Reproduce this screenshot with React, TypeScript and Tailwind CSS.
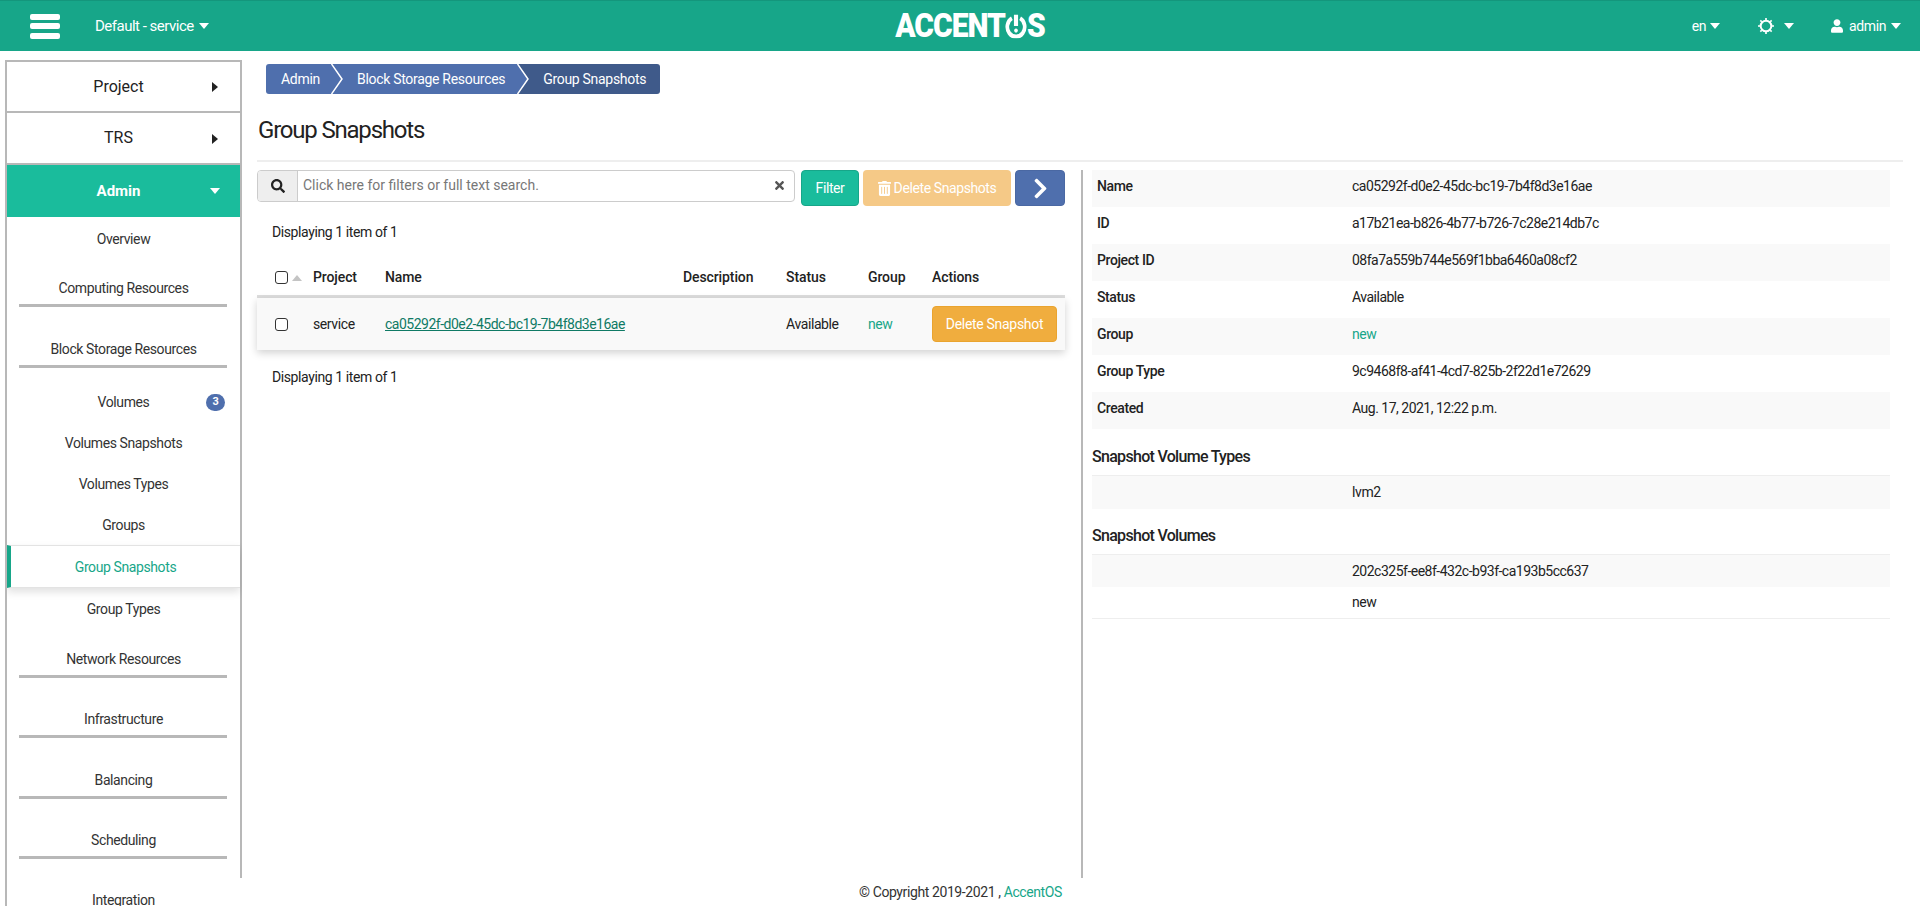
import { FaChevronRight, FaSearch, FaTimes, FaTrashAlt, FaUser } from "react-icons/fa";

const details = [
  ["Name", "ca05292f-d0e2-45dc-bc19-7b4f8d3e16ae"],
  ["ID", "a17b21ea-b826-4b77-b726-7c28e214db7c"],
  ["Project ID", "08fa7a559b744e569f1bba6460a08cf2"],
  ["Status", "Available"],
  ["Group", "new"],
  ["Group Type", "9c9468f8-af41-4cd7-825b-2f22d1e72629"],
  ["Created", "Aug. 17, 2021, 12:22 p.m."],
];

function Caret({ dir = "down", className = "" }: { dir?: "down" | "right"; className?: string }) {
  return (
    <svg viewBox="0 0 10 10" className={`shrink-0 fill-current ${className}`}>
      {dir === "down" ? <polygon points="0,2 10,2 5,8" /> : <polygon points="2,0 8,5 2,10" />}
    </svg>
  );
}

function SideGroup({ label, height }: { label: string; height: string }) {
  return (
    <div className={`flex flex-col justify-end ${height}`}>
      <div className="pb-[5px] text-center text-[#333]">{label}</div>
      <div className="ml-[12px] mr-[13px] h-[3px] bg-[#b8b8b8]" />
    </div>
  );
}

function SideLink({ label, badge, height = "h-[41px]" }: { label: string; badge?: string; height?: string }) {
  return (
    <div className={`relative flex items-center justify-center text-[#333] ${height}`}>
      {label}
      {badge && (
        <span className="absolute right-[15px] top-[12px] flex h-[17px] w-[19px] items-center justify-center rounded-full bg-[#4f6fad] text-[11px] font-bold text-white">
          {badge}
        </span>
      )}
    </div>
  );
}

function Sidebar() {
  return (
    <aside className="h-[846px] w-[237px] shrink-0 overflow-hidden border-l-2 border-[#b8b8b8]">
      <div className="h-[818px] border-r-2 border-[#b8b8b8]">
        <div className="relative flex h-[53px] items-center justify-center border-y-2 border-[#b8b8b8] pr-[10px] text-[16px] tracking-normal text-[#222]">
          Project
          <Caret dir="right" className="absolute right-[20px] top-[20px] h-[10px] w-[10px]" />
        </div>
        <div className="relative flex h-[52px] items-center justify-center border-b-2 border-[#b8b8b8] pr-[10px] text-[16px] tracking-normal text-[#222]">
          TRS
          <Caret dir="right" className="absolute right-[20px] top-[21px] h-[10px] w-[10px]" />
        </div>
        <div className="relative flex h-[52px] items-center justify-center bg-[#1abc9c] pr-[10px] text-[15px] font-bold tracking-normal text-white">
          Admin
          <Caret className="absolute right-[20px] top-[21px] h-[10px] w-[10px]" />
        </div>
        <SideLink label="Overview" height="h-[44px]" />
        <SideGroup label="Computing Resources" height="h-[46px]" />
        <SideGroup label="Block Storage Resources" height="h-[61px]" />
        <div className="h-[14px]" />
        <SideLink label="Volumes" badge="3" />
        <SideLink label="Volumes Snapshots" />
        <SideLink label="Volumes Types" />
        <SideLink label="Groups" height="h-[40px]" />
        <div className="relative z-10 flex h-[43px] items-center justify-center border-y border-[#e3e3e3] border-l-4 border-l-[#17a689] bg-white pt-[1px] text-[#17a689] shadow-[0_4px_8px_rgba(0,0,0,0.12)]">
          Group Snapshots
        </div>
        <SideLink label="Group Types" height="h-[42px]" />
        <SideGroup label="Network Resources" height="h-[48px]" />
        <SideGroup label="Infrastructure" height="h-[60px]" />
        <SideGroup label="Balancing" height="h-[61px]" />
        <SideGroup label="Scheduling" height="h-[60px]" />
        <SideGroup label="Integration" height="h-[60px]" />
      </div>
    </aside>
  );
}

function Header() {
  return (
    <header className="flex h-[51px] items-center border-t border-[#14967c] bg-[#17a689] text-white">
      <div className="flex w-[895px] items-center">
        <div className="ml-[30px] flex h-[25px] w-[30px] flex-col justify-between">
          <span className="h-[6px] rounded-[2px] bg-white" />
          <span className="h-[6px] rounded-[2px] bg-white" />
          <span className="h-[6px] rounded-[2px] bg-white" />
        </div>
        <div className="ml-[35px] flex items-center gap-[5px] text-[15px] tracking-[-0.5px]">
          Default - service
          <Caret className="h-[10px] w-[10px]" />
        </div>
      </div>
      <div className="flex h-[26px] w-[150px] scale-y-[1.12] items-center justify-center text-[30px] font-black leading-none tracking-[-1px]">
        ACCENT
        <svg viewBox="0 0 24 24" className="h-[22px] w-[22px] shrink-0" fill="none" stroke="currentColor">
          <path d="M7.5 4.5a9.5 9.5 0 1 0 9 0" strokeWidth="4" />
          <path d="M12 1v11" strokeWidth="4.5" />
          <circle cx="12" cy="16.5" r="2" fill="currentColor" stroke="none" />
        </svg>
        S
      </div>
      <div className="ml-auto flex items-center pr-[19px]">
        <span>en</span>
        <Caret className="ml-[4px] h-[10px] w-[10px]" />
        <svg viewBox="0 0 24 24" className="ml-[38px] h-[16px] w-[16px] shrink-0" fill="none" stroke="currentColor">
          <circle cx="12" cy="12" r="8" strokeWidth="3" />
          <path d="M12 0v3M12 21v3M0 12h3M21 12h3M3.5 3.5l2.1 2.1M18.4 18.4l2.1 2.1M3.5 20.5l2.1-2.1M18.4 5.6l2.1-2.1" strokeWidth="2.5" />
        </svg>
        <Caret className="ml-[10px] h-[10px] w-[10px]" />
        <FaUser className="ml-[37px] h-[14px] w-[12px]" />
        <span className="ml-[6px]">admin</span>
        <Caret className="ml-[5px] h-[10px] w-[10px]" />
      </div>
    </header>
  );
}

function Breadcrumb() {
  return (
    <div className="ml-[9px] flex h-[30px] w-[394px] overflow-hidden rounded-[3px] tracking-[-0.3px] text-white">
      <div className="flex items-center whitespace-nowrap bg-[#4f6fad] pl-[15px] pr-[11px]">Admin</div>
      <svg viewBox="0 0 12 30" className="h-[30px] w-[12px] shrink-0" preserveAspectRatio="none">
        <rect width="12" height="30" fill="#4f6fad" />
        <polyline points="0.5,0 11,15 0.5,30" fill="none" stroke="white" strokeWidth="1.5" />
      </svg>
      <div className="flex items-center whitespace-nowrap bg-[#4f6fad] pl-[14px] pr-[12px]">Block Storage Resources</div>
      <svg viewBox="0 0 12 30" className="h-[30px] w-[12px] shrink-0" preserveAspectRatio="none">
        <rect width="12" height="30" fill="#3f5a8a" />
        <polygon points="0,0 0.5,0 11,15 0.5,30 0,30" fill="#4f6fad" />
        <polyline points="0.5,0 11,15 0.5,30" fill="none" stroke="white" strokeWidth="1.5" />
      </svg>
      <div className="flex flex-1 items-center whitespace-nowrap bg-[#3f5a8a] pl-[14px]">Group Snapshots</div>
    </div>
  );
}

function Toolbar() {
  return (
    <div className="flex items-start">
      <div className="flex h-[32px] w-[538px] rounded-[4px] border border-[#ccc]">
        <div className="flex w-[40px] items-center justify-center rounded-l-[3px] border-r border-[#ccc] bg-[#eee]">
          <FaSearch className="h-[14px] w-[14px] text-[#222]" />
        </div>
        <div className="flex flex-1 items-center justify-between pb-[2px] pl-[5px] pr-[8px] tracking-normal text-[#777]">
          Click here for filters or full text search.
          <FaTimes className="h-[13px] w-[13px] text-[#555]" />
        </div>
      </div>
      <button className="ml-[6px] h-[36px] w-[58px] rounded-[4px] border border-[#17a689] bg-[#1abc9c] text-white">Filter</button>
      <button className="ml-[4px] flex h-[36px] w-[148px] items-center justify-center gap-[3px] rounded-[4px] bg-[#f5c987] text-white">
        <FaTrashAlt className="h-[15px] w-[13px]" />
        Delete Snapshots
      </button>
      <button className="ml-[4px] flex h-[36px] w-[50px] items-center justify-center rounded-[4px] border border-[#4a68a3] bg-[#4f6fad] text-white">
        <FaChevronRight className="h-[23px] w-[19px]" />
      </button>
    </div>
  );
}

function Checkbox() {
  return <span className="block h-[13px] w-[13px] rounded-[3px] border-[1.5px] border-[#333] bg-white" />;
}

function SnapshotTable() {
  return (
    <div className="mt-[16px]">
      <div className="h-[20px] pl-[15px] leading-[20px]">Displaying 1 item of 1</div>
      <div className="mt-[18px] flex h-[38px] items-center border-b-[3px] border-[#ddd] font-medium tracking-[-0.1px] text-[#222]">
        <div className="flex w-[56px] items-center pl-[18px]">
          <Checkbox />
          <Caret className="ml-[4px] h-[10px] w-[10px] rotate-180 text-[#c4c4c4]" />
        </div>
        <div className="w-[72px]">Project</div>
        <div className="w-[298px]">Name</div>
        <div className="w-[103px]">Description</div>
        <div className="w-[82px]">Status</div>
        <div className="w-[64px]">Group</div>
        <div>Actions</div>
      </div>
      <div className="flex h-[52px] items-center bg-[#f9f9f9] shadow-[0_3px_8px_rgba(0,0,0,0.18)]">
        <div className="w-[56px] pl-[18px]">
          <Checkbox />
        </div>
        <div className="w-[72px]">service</div>
        <div className="w-[298px]">
          <span className="tracking-[-0.5px] text-[#0f7a65] underline">ca05292f-d0e2-45dc-bc19-7b4f8d3e16ae</span>
        </div>
        <div className="w-[103px]" />
        <div className="w-[82px]">Available</div>
        <div className="w-[64px] text-[#17a689]">new</div>
        <button className="h-[36px] w-[125px] rounded-[4px] border border-[#eaa42f] bg-[#f0ad3e] tracking-[-0.3px] text-white">Delete Snapshot</button>
      </div>
      <div className="mt-[17px] pl-[15px] leading-[20px]">Displaying 1 item of 1</div>
    </div>
  );
}

function Details() {
  return (
    <div className="w-[798px]">
      {details.map(([k, v], i) => (
        <div key={k} className={`flex h-[37px] items-start pt-[6px] ${i % 2 === 0 ? "bg-[#f9f9f9]" : ""}`}>
          <div className="w-[260px] pl-[5px] font-medium text-[#222]">{k}</div>
          <div className={k === "Group" ? "text-[#17a689]" : "tracking-[-0.5px]"}>{v}</div>
        </div>
      ))}
      <h4 className="mt-[18px] h-[20px] text-[16px] font-medium leading-[20px] tracking-[-0.7px] text-[#222]">Snapshot Volume Types</h4>
      <div className="mt-[8px] flex h-[34px] items-center border-t border-[#eee] bg-[#f9f9f9] pl-[260px]">lvm2</div>
      <h4 className="mt-[17px] h-[20px] text-[16px] font-medium leading-[20px] tracking-[-0.7px] text-[#222]">Snapshot Volumes</h4>
      <div className="mt-[8px] flex h-[33px] items-center border-t border-[#eee] bg-[#f9f9f9] pl-[260px] tracking-[-0.5px]">202c325f-ee8f-432c-b93f-ca193b5cc637</div>
      <div className="flex h-[32px] items-center border-b border-[#eee] pl-[260px]">new</div>
    </div>
  );
}

export default function App() {
  return (
    <div className="h-[906px] overflow-hidden bg-white font-['Roboto',sans-serif] text-[14px] tracking-[-0.4px] text-[#222]">
      <Header />
      <div className="flex pl-[5px] pt-[9px]">
        <Sidebar />
        <main className="relative h-[846px] flex-1 pl-[15px] pt-[4px]">
          <Breadcrumb />
          <h1 className="ml-[1px] mt-[22px] text-[24px] font-normal leading-[28px] tracking-[-1.2px] text-[#222]">Group Snapshots</h1>
          <div className="mr-[17px] mt-[16px] h-[2px] bg-[#eee]" />
          <div className="mt-[8px] flex">
            <div className="w-[808px]">
              <Toolbar />
              <SnapshotTable />
            </div>
            <div className="ml-[16px] h-[708px] w-[2px] bg-[#b8b8b8]" />
            <div className="ml-[9px]">
              <Details />
            </div>
          </div>
          <div className="absolute bottom-[3px] left-[617px] text-[#333]">
            © Copyright 2019-2021 , <span className="text-[#17a689]">AccentOS</span>
          </div>
        </main>
      </div>
    </div>
  );
}
